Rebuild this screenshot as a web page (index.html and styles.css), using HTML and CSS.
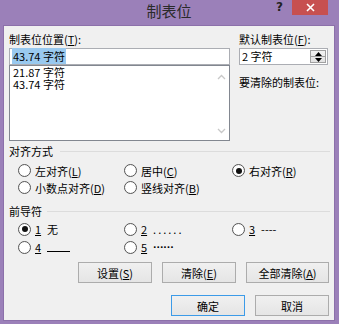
FILE: index.html
```html
<!DOCTYPE html>
<html lang="zh-CN">
<head>
  <meta charset="UTF-8">
  <title>制表位</title>
  <link rel="stylesheet" href="styles.css">
</head>
<body>
  <div class="window">
    <div class="titlebar">
      <div class="title-spacer"></div>
      <div class="title">制表位</div>
      <div class="caption-btns">
        <span class="help">?</span>
        <span class="close">
          <svg width="9" height="9" viewBox="0 0 9 9"><path d="M1 1L8 8M8 1L1 8" stroke="#fff" stroke-width="1.6"/></svg>
        </span>
      </div>
    </div>

    <div class="client">
      <div class="top">
        <div class="col-left">
          <div class="label">制表位位置(<u>T</u>):</div>
          <div class="textbox"><span class="sel">43.74 字符</span></div>
          <div class="listbox">
            <div class="items">
              <div>21.87 字符</div>
              <div>43.74 字符</div>
            </div>
            <div class="scroll">
              <svg width="9" height="6" viewBox="0 0 9 6"><path d="M1 5L4.5 1.5L8 5" fill="none" stroke="#c8c8c8" stroke-width="1.3"/></svg>
              <svg width="9" height="6" viewBox="0 0 9 6"><path d="M1 1L4.5 4.5L8 1" fill="none" stroke="#c8c8c8" stroke-width="1.3"/></svg>
            </div>
          </div>
        </div>
        <div class="col-right">
          <div class="label">默认制表位(<u>F</u>):</div>
          <div class="spin">
            <span class="spin-text">2 字符</span>
            <span class="spin-btns">
              <span class="spin-btn"><svg width="7" height="4" viewBox="0 0 7 4"><path d="M3.5 0L7 4H0Z" fill="#000"/></svg></span>
              <span class="spin-btn"><svg width="7" height="4" viewBox="0 0 7 4"><path d="M0 0H7L3.5 4Z" fill="#000"/></svg></span>
            </span>
          </div>
          <div class="label clear-label">要清除的制表位:</div>
        </div>
      </div>

      <div class="group-head"><span>对齐方式</span><span class="line"></span></div>
      <div class="radio-grid align-grid">
        <label class="radio"><span class="dot"></span>左对齐(<u>L</u>)</label>
        <label class="radio"><span class="dot"></span>居中(<u>C</u>)</label>
        <label class="radio"><span class="dot on"></span>右对齐(<u>R</u>)</label>
        <label class="radio"><span class="dot"></span>小数点对齐(<u>D</u>)</label>
        <label class="radio"><span class="dot"></span>竖线对齐(<u>B</u>)</label>
      </div>

      <div class="group-head lead-head"><span>前导符</span><span class="line"></span></div>
      <div class="radio-grid lead-grid">
        <label class="radio"><span class="dot on"></span><u class="num">1</u>无</label>
        <label class="radio"><span class="dot"></span><u class="num">2</u><span class="dots">......</span></label>
        <label class="radio"><span class="dot"></span><u class="num">3</u>----</label>
        <label class="radio"><span class="dot"></span><u class="num">4</u><span class="under"></span></label>
        <label class="radio"><span class="dot"></span><u class="num">5</u><span class="bold-dots">······</span></label>
      </div>

      <div class="btn-row">
        <button class="btn">设置(<u>S</u>)</button>
        <button class="btn">清除(<u>E</u>)</button>
        <button class="btn wide">全部清除(<u>A</u>)</button>
      </div>
      <div class="btn-row ok-row">
        <button class="btn default">确定</button>
        <button class="btn">取消</button>
      </div>
    </div>
  </div>
</body>
</html>
```

FILE: styles.css
```css
body {
  margin: 0;
  background-color: #9b80b9;
  font-family: "Noto Sans CJK SC", "Noto Sans", sans-serif;
  font-size: 11px;
  color: #000;
}

.window {
  width: 339px;
  height: 324px;
  box-sizing: border-box;
  padding: 0 5px 4px 4px;
  display: flex;
  flex-direction: column;
  background-color: #9b80b9;
}

/* title bar */
.titlebar {
  height: 26px;
  display: flex;
  align-items: flex-start;
  flex-shrink: 0;
}

.title-spacer {
  width: 63px;
}

.title {
  flex: 1;
  text-align: center;
  font-size: 15px;
  line-height: 18px;
  padding-top: 2px;
  color: #2a2a2a;
}

.caption-btns {
  width: 63px;
  display: flex;
  align-items: flex-start;
}

.help {
  width: 17px;
  margin-right: 4px;
  text-align: center;
  font-family: "DejaVu Sans", sans-serif;
  font-weight: bold;
  font-size: 12px;
  line-height: 14px;
  color: #222;
}

.close {
  width: 36px;
  height: 15px;
  background-color: #c75050;
  display: flex;
  align-items: center;
  justify-content: center;
}

/* client area */
.client {
  flex: 1;
  background-color: #f0f0f0;
  padding: 6px 5px 0 5px;
  box-shadow: 0 0 0 1px #8c70aa;
}

.label {
  line-height: 14px;
  white-space: nowrap;
}

.top {
  display: flex;
  gap: 9px;
}

.col-left {
  width: 221px;
}

.col-right {
  width: 89px;
}

.textbox {
  margin-top: 2px;
  height: 17px;
  box-sizing: border-box;
  border: 1px solid #abadb3;
  background-color: #fff;
  padding: 1px 2px;
  line-height: 13px;
}

.sel {
  background-color: #99c9ef;
  padding: 0 1px;
}

.listbox {
  height: 76px;
  box-sizing: border-box;
  border: 1px solid #828790;
  background-color: #fff;
  display: flex;
}

.items {
  flex: 1;
  padding: 0 0 0 3px;
  line-height: 12px;
}

.scroll {
  width: 16px;
  display: flex;
  flex-direction: column;
  justify-content: space-between;
  align-items: center;
  padding: 8px 0 6px;
}

.spin {
  margin-top: 2px;
  height: 17px;
  box-sizing: border-box;
  border: 1px solid #abadb3;
  background-color: #fff;
  display: flex;
  align-items: stretch;
}

.spin-text {
  flex: 1;
  padding-left: 2px;
  line-height: 15px;
}

.spin-btns {
  width: 14px;
  margin: 1px;
  display: flex;
  flex-direction: column;
  border: 1px solid #a0a0a0;
  background: linear-gradient(#f3f3f3, #e2e2e2);
}

.spin-btn {
  flex: 1;
  display: flex;
  align-items: center;
  justify-content: center;
}

.spin-btn + .spin-btn {
  border-top: 1px solid #a0a0a0;
}

.clear-label {
  margin-top: 10px;
}

/* groups */
.group-head {
  margin-top: 3px;
  display: flex;
  align-items: center;
  gap: 7px;
  line-height: 14px;
}

.group-head .line {
  flex: 1;
  height: 1px;
  background-color: #dcdcdc;
  margin-right: -1px;
}

.lead-head {
  margin-top: 8px;
  gap: 5px;
}

.radio-grid {
  display: grid;
  grid-template-columns: 106px 108px 1fr;
  padding-left: 9px;
}

.align-grid {
  margin-top: 4px;
  grid-auto-rows: 17px;
}

.lead-grid {
  margin-top: 2px;
  grid-auto-rows: 18px;
}

.radio {
  display: flex;
  align-items: center;
  white-space: nowrap;
  line-height: 14px;
}

.dot {
  width: 13px;
  height: 13px;
  box-sizing: border-box;
  border-radius: 50%;
  border: 1px solid #555;
  background: radial-gradient(#fff 55%, #e6e6e6);
  margin-right: 4px;
  display: flex;
  align-items: center;
  justify-content: center;
}

.dot.on::after {
  content: "";
  width: 6px;
  height: 6px;
  border-radius: 50%;
  background-color: #111;
}

.num {
  margin-right: 6px;
}

.dots {
  letter-spacing: 2px;
}

.under {
  display: inline-block;
  width: 23px;
  height: 9px;
  border-bottom: 1px solid #000;
}

.bold-dots {
  font-family: "DejaVu Sans", sans-serif;
  font-weight: bold;
  font-size: 9px;
  letter-spacing: 0;
}

/* buttons */
.btn-row {
  margin-top: 6px;
  display: flex;
  justify-content: flex-end;
  gap: 10px;
}

.ok-row {
  margin-top: 12px;
}

.btn {
  width: 74px;
  height: 21px;
  padding: 0;
  font-family: inherit;
  font-size: 11px;
  color: #000;
  border: 1px solid #acacac;
  background: linear-gradient(#f0f0f0, #e5e5e5);
}

.btn.wide {
  width: 83px;
}

.btn.default {
  border-color: #3c9be8;
}
```
